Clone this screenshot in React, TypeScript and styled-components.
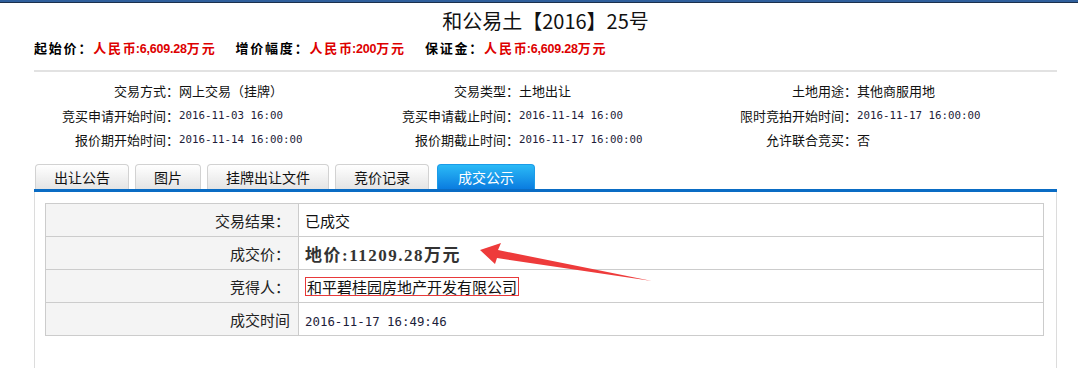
import styled, { createGlobalStyle } from "styled-components";

const GlobalStyle = createGlobalStyle`
  html, body {
    margin: 0;
    padding: 0;
    background: #fff;
    overflow: hidden;
  }
  body {
    font-family: "Noto Sans CJK SC", "Liberation Sans", sans-serif;
    color: #222;
  }
`;

const TopBar = styled.div`
  height: 2px;
  background: #2f5f9c;
  border-bottom: 1px solid #1b2f4d;
`;

const Main = styled.div`
  position: relative;
  margin-left: 34px;
  width: 1023px;
`;

const Title = styled.h1`
  margin: 0;
  padding-top: 4px;
  font-size: 20px;
  line-height: 28px;
  font-weight: normal;
  text-align: center;
  color: #111;
`;

const PriceLine = styled.div`
  display: flex;
  gap: 19px;
  margin-top: 3px;
  padding-bottom: 12px;
  height: 20px;
  line-height: 20px;
  font-size: 13px;
  font-weight: bold;
  letter-spacing: 1.8px;
  border-bottom: 2px solid #e2e2e2;
`;

const PriceItem = styled.span`
  color: #000;
`;

const PriceValue = styled.span`
  color: #dd0000;
`;

const Num = styled.span`
  margin-left: -1.8px;
  font-family: "Liberation Sans", sans-serif;
  font-size: 12.5px;
  letter-spacing: -0.2px;
`;

const InfoGrid = styled.div`
  display: grid;
  grid-template-columns: 145px 194px 146px 192px 146px 1fr;
  grid-auto-rows: 24.5px;
  align-items: center;
  padding: 6.5px 0 12px;
  font-size: 13px;
`;

const InfoLabel = styled.span`
  text-align: right;
  color: #111;
`;

const InfoValue = styled.span<{ $mono?: boolean }>`
  color: ${(p) => (p.$mono ? "#1d1d3a" : "#111")};
  font-family: ${(p) =>
    p.$mono
      ? `"DejaVu Sans Mono", monospace`
      : `"Noto Sans CJK SC", sans-serif`};
  font-size: ${(p) => (p.$mono ? "10.8px" : "13px")};
`;

const TabStrip = styled.div`
  display: flex;
  align-items: flex-end;
  gap: 6px;
  padding-left: 1px;
  border-bottom: 3px solid #0a6cc4;
`;

const Tab = styled.div<{ $active?: boolean }>`
  box-sizing: border-box;
  height: 25px;
  margin-left: ${(p) => (p.$active ? "2px" : "0")};
  padding: 0 ${(p) => (p.$active ? "20px" : "18px")};
  line-height: 24px;
  font-size: 14px;
  border: 1px solid ${(p) => (p.$active ? "#1b9be8" : "#d2d2d2")};
  border-bottom: none;
  border-radius: 4px 4px 0 0;
  color: ${(p) => (p.$active ? "#fff" : "#111")};
  background: ${(p) =>
    p.$active
      ? "linear-gradient(#2bbaf6, #0a7ce0)"
      : "linear-gradient(#ffffff, #e4e4e4)"};
`;

const Panel = styled.div`
  border-left: 1px solid #dcdcdc;
  border-right: 1px solid #dcdcdc;
  padding: 11px 12px 40px 10px;
`;

const ResultTable = styled.table`
  width: 100%;
  border-collapse: collapse;
  font-size: 15px;
`;

const Row = styled.tr`
  height: 33px;
`;

const LabelCell = styled.td`
  width: 244px;
  padding: 0 8px 0 0;
  text-align: right;
  background: #f4f4f4;
  border: 1px solid #cccccc;
  color: #222;
`;

const ValueCell = styled.td`
  padding: 0 0 0 6px;
  border: 1px solid #cccccc;
  color: #111;
`;

const LandPrice = styled.span`
  font-family: "Liberation Serif", "Noto Sans CJK SC", serif;
  font-weight: bold;
  font-size: 17px;
  letter-spacing: 1.5px;
  color: #333;
`;

const Winner = styled.span`
  display: inline-block;
  padding: 0 1px;
  line-height: 17px;
  border: 1px solid #e8393a;
`;

const DateText = styled.span`
  font-family: "DejaVu Sans Mono", monospace;
  font-size: 12.4px;
  color: #1d1d3a;
`;

const ArrowLayer = styled.svg`
  position: absolute;
  left: -34px;
  top: -3px;
  pointer-events: none;
`;

const info: { label: string; value: string; mono?: boolean }[] = [
  { label: "交易方式：", value: "网上交易（挂牌）" },
  { label: "交易类型：", value: "土地出让" },
  { label: "土地用途：", value: "其他商服用地" },
  { label: "竞买申请开始时间：", value: "2016-11-03 16:00", mono: true },
  { label: "竞买申请截止时间：", value: "2016-11-14 16:00", mono: true },
  { label: "限时竞拍开始时间：", value: "2016-11-17 16:00:00", mono: true },
  { label: "报价期开始时间：", value: "2016-11-14 16:00:00", mono: true },
  { label: "报价期截止时间：", value: "2016-11-17 16:00:00", mono: true },
  { label: "允许联合竞买：", value: "否" },
];

const tabs = ["出让公告", "图片", "挂牌出让文件", "竞价记录", "成交公示"];

export default function App() {
  return (
    <>
      <GlobalStyle />
      <TopBar />
      <Main>
        <Title>和公易土【2016】25号</Title>
        <PriceLine>
          <PriceItem>
            起始价：
            <PriceValue>
              人民币<Num>:6,609.28</Num>万元
            </PriceValue>
          </PriceItem>
          <PriceItem>
            增价幅度：
            <PriceValue>
              人民币<Num>:200</Num>万元
            </PriceValue>
          </PriceItem>
          <PriceItem>
            保证金：
            <PriceValue>
              人民币<Num>:6,609.28</Num>万元
            </PriceValue>
          </PriceItem>
        </PriceLine>
        <InfoGrid>
          {info.flatMap((item) => [
            <InfoLabel key={item.label}>{item.label}</InfoLabel>,
            <InfoValue key={item.label + "v"} $mono={item.mono}>
              {item.value}
            </InfoValue>,
          ])}
        </InfoGrid>
        <TabStrip>
          {tabs.map((t) => (
            <Tab key={t} $active={t === "成交公示"}>
              {t}
            </Tab>
          ))}
        </TabStrip>
        <Panel>
          <ResultTable>
            <tbody>
              <Row>
                <LabelCell>交易结果：</LabelCell>
                <ValueCell>已成交</ValueCell>
              </Row>
              <Row>
                <LabelCell>成交价：</LabelCell>
                <ValueCell>
                  <LandPrice>地价:11209.28万元</LandPrice>
                </ValueCell>
              </Row>
              <Row>
                <LabelCell>竞得人：</LabelCell>
                <ValueCell>
                  <Winner>和平碧桂园房地产开发有限公司</Winner>
                </ValueCell>
              </Row>
              <Row>
                <LabelCell>成交时间</LabelCell>
                <ValueCell>
                  <DateText>2016-11-17 16:49:46</DateText>
                </ValueCell>
              </Row>
            </tbody>
          </ResultTable>
        </Panel>
        <ArrowLayer width="1078" height="368" viewBox="0 0 1078 368">
          <polygon
            points="480,250 501,243 498,250 652,281 497,258 495,264"
            fill="#ee3b3b"
          />
        </ArrowLayer>
      </Main>
    </>
  );
}
